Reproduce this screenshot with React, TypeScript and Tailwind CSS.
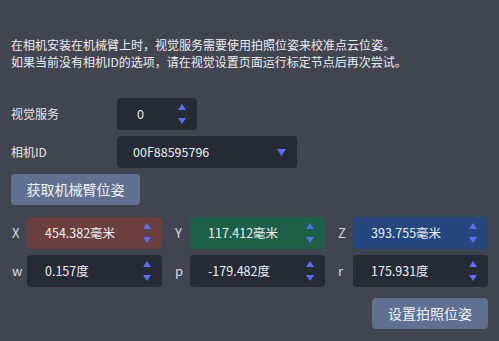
import React from "react";

const font = { fontFamily: '"Noto Sans CJK SC", "Noto Sans", sans-serif' };

function Arrows() {
  return (
    <div className="flex flex-col items-center justify-between h-[20px] ml-auto">
      <svg width="8" height="6" viewBox="0 0 8 6"><polygon points="4,0 8,6 0,6" fill="#5d6df5" /></svg>
      <svg width="8" height="6" viewBox="0 0 8 6"><polygon points="0,0 8,0 4,6" fill="#5d6df5" /></svg>
    </div>
  );
}

function Spin({ value, bg, w }: { value: string; bg: string; w?: string }) {
  return (
    <div className={`flex items-center h-[32px] rounded-[4px] pl-[18px] pr-[11px] ${bg} ${w ?? ""}`}>
      <span className="text-[12.5px] text-[#eef0f4]">{value}</span>
      <Arrows />
    </div>
  );
}

export default function App() {
  const rows = [
    [
      { l: "X", v: "454.382毫米", bg: "bg-[#6a3f3e]" },
      { l: "Y", v: "117.412毫米", bg: "bg-[#1d5f47]" },
      { l: "Z", v: "393.755毫米", bg: "bg-[#25467f]" },
    ],
    [
      { l: "w", v: "0.157度", bg: "bg-[#252a35]" },
      { l: "p", v: "-179.482度", bg: "bg-[#252a35]" },
      { l: "r", v: "175.931度", bg: "bg-[#252a35]" },
    ],
  ];
  return (
    <div style={font} className="w-[499px] h-[341px] bg-[#40454f] px-[11px] pt-[36px] text-[#e6e8ec] flex flex-col">
      <p className="text-[12px] leading-[17px] text-[#eceef2]">
        在相机安装在机械臂上时，视觉服务需要使用拍照位姿来校准点云位姿。
        <br />
        如果当前没有相机ID的选项，请在视觉设置页面运行标定节点后再次尝试。
      </p>
      <div className="mt-[28px] flex items-center h-[32px]">
        <span className="w-[106px] text-[12px]">视觉服务</span>
        <Spin value="0" bg="bg-[#252a35]" w="w-[80px] pl-[20px]" />
      </div>
      <div className="mt-[6px] flex items-center h-[32px]">
        <span className="w-[106px] text-[12px]">相机ID</span>
        <div className="w-[180px] h-[32px] rounded-[4px] bg-[#252a35] flex items-center pl-[16px] pr-[11px]">
          <span className="text-[12.5px] text-[#eef0f4]">00F88595796</span>
          <svg className="ml-auto" width="9" height="7" viewBox="0 0 9 7"><polygon points="0,0 9,0 4.5,7" fill="#5d6df5" /></svg>
        </div>
      </div>
      <div className="mt-[6px]">
        <button className="w-[129px] h-[31px] rounded-[4px] bg-[#5f7090] text-[14px] text-[#f2f4f8]">获取机械臂位姿</button>
      </div>
      <div className="mt-[12px] flex flex-col gap-[6px]">
        {rows.map((r, i) => (
          <div key={i} className="flex gap-[12px]">
            {r.map((c) => (
              <div key={c.l} className="flex items-center">
                <span className="w-[16px] pl-[1px] text-[13px] text-[#d8dce2]">{c.l}</span>
                <Spin value={c.v} bg={c.bg} w="w-[135px]" />
              </div>
            ))}
          </div>
        ))}
      </div>
      <div className="mt-[11px] flex justify-end">
        <button className="w-[116px] h-[31px] rounded-[4px] bg-[#5f7090] text-[14px] text-[#f2f4f8]">设置拍照位姿</button>
      </div>
    </div>
  );
}
